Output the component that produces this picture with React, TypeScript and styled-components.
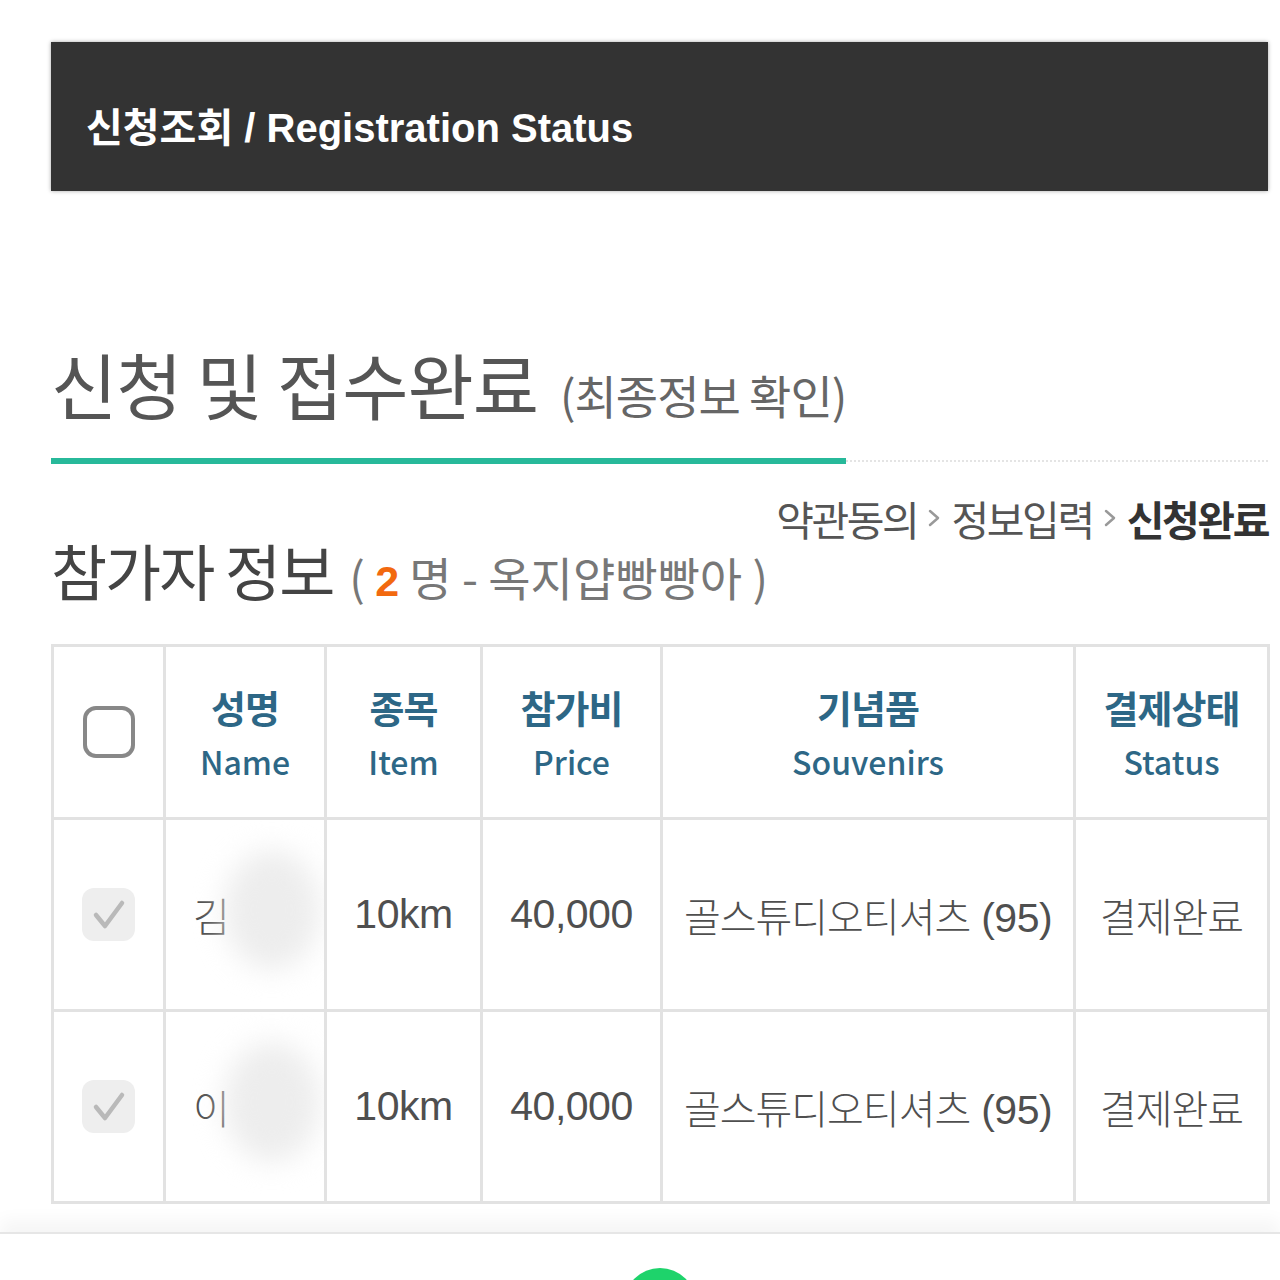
import styled, { createGlobalStyle } from 'styled-components';

const GlobalStyle = createGlobalStyle`
  html, body {
    margin: 0;
    padding: 0;
    background: #fff;
  }
  body {
    width: 1280px;
    height: 1280px;
    overflow: hidden;
    font-family: 'Liberation Sans', 'Noto Sans CJK KR', sans-serif;
  }
`;

const KR = `'Noto Sans CJK KR', 'Liberation Sans', sans-serif`;
const BODY = `'Liberation Sans', 'Noto Sans CJK KR', sans-serif`;

const Page = styled.div`
  width: 1280px;
  height: 1280px;
  overflow: hidden;
  display: flex;
  flex-direction: column;
`;

const Content = styled.div`
  padding: 42px 12px 0 51px;
  display: flex;
  flex-direction: column;
`;

// 상단 어두운 타이틀 바
const TopBar = styled.div`
  height: 149px;
  background: #333;
  box-shadow: 0 0 4px rgba(0, 0, 0, 0.35);
  display: flex;
  align-items: center;
  padding: 16px 0 0 35px;
  box-sizing: border-box;
`;

const TopTitle = styled.h1`
  margin: 0;
  font-family: ${BODY};
  font-size: 40px;
  font-weight: 700;
  color: #fff;
  letter-spacing: 0;
`;

const Heading = styled.h2`
  margin: 150px 0 0 0;
  font-family: ${KR};
  font-size: 72px;
  line-height: 84px;
  font-weight: 400;
  color: #555;
  letter-spacing: -1px;
  white-space: nowrap;
`;

const HeadingSub = styled.span`
  font-size: 46px;
  line-height: 1;
  letter-spacing: -1px;
  color: #666;
  margin-left: 22px;
`;

const Divider = styled.div`
  margin-top: 33px;
  display: flex;
  align-items: center;
`;

const DividerAccent = styled.div`
  width: 795px;
  height: 6px;
  background: #27b99a;
`;

const DividerRest = styled.div`
  flex: 1;
  border-top: 2px dotted #e4e4e4;
`;

const Steps = styled.div`
  margin-top: 29px;
  display: flex;
  justify-content: flex-end;
  align-items: center;
  gap: 6px;
  font-family: ${KR};
  font-size: 41px;
  line-height: 50px;
  letter-spacing: -2.4px;
  color: #555;
`;

const Step = styled.span<{ $active?: boolean }>`
  font-weight: ${(p) => (p.$active ? 700 : 400)};
  color: ${(p) => (p.$active ? '#333' : '#555')};
`;

const StepArrow = () => (
  <svg width="22" height="30" viewBox="0 0 22 30" fill="none">
    <polyline points="7,8 15,15 7,22" stroke="#999" strokeWidth="2.5" strokeLinecap="round" strokeLinejoin="round" />
  </svg>
);

const SectionTitle = styled.h3`
  margin: -10px 0 0 0;
  font-family: ${KR};
  font-size: 61px;
  line-height: 74px;
  font-weight: 400;
  color: #444;
  letter-spacing: -2px;
  white-space: nowrap;
`;

const SectionSub = styled.span`
  font-size: 46px;
  line-height: 1;
  color: #777;
  letter-spacing: 0;
  margin-left: 16px;
`;

const Count = styled.b`
  font-family: ${BODY};
  font-size: 43px;
  font-weight: 700;
  color: #f2690f;
`;

const Table = styled.table`
  margin-top: 37px;
  width: 1217px;
  border-collapse: collapse;
  table-layout: fixed;
  border: 3px solid #e2e2e2;
`;

const HeadCell = styled.th`
  height: 170px;
  border: 3px solid #e2e2e2;
  text-align: center;
  vertical-align: middle;
  padding: 0;
  font-family: ${KR};
  color: #2d6786;
`;

const HeadKo = styled.div`
  font-size: 38px;
  font-weight: 700;
  line-height: 46px;
  letter-spacing: -1px;
`;

const HeadEn = styled.div`
  margin-top: 12px;
  font-size: 32px;
  font-weight: 500;
  line-height: 38px;
`;

const Cell = styled.td<{ $align?: 'left' | 'center' }>`
  height: 189px;
  border: 3px solid #e2e2e2;
  padding: 0 0 0 ${(p) => (p.$align === 'left' ? '27px' : '0')};
  text-align: ${(p) => p.$align ?? 'center'};
  vertical-align: middle;
  font-family: ${BODY};
  font-size: 41px;
  color: #4f4f4f;
  letter-spacing: -0.5px;
  position: relative;
  overflow: hidden;
`;

const KoText = styled.span`
  font-family: ${KR};
  font-size: 40px;
  font-weight: 300;
  letter-spacing: -1px;
`;

// 이름 가림 처리 (블러)
const Smudge = styled.div`
  position: absolute;
  left: 58px;
  top: 30px;
  width: 96px;
  height: 120px;
  border-radius: 50%;
  background: #ededed;
  filter: blur(14px);
`;

const BoxEmpty = styled.div`
  width: 52px;
  height: 52px;
  margin: 0 auto;
  box-sizing: border-box;
  border: 4px solid #888;
  border-radius: 13px;
  background: #fff;
`;

const BoxChecked = styled.div`
  width: 53px;
  height: 53px;
  margin: 0 auto;
  border-radius: 12px;
  background: #eeeeee;
  display: flex;
  align-items: center;
  justify-content: center;
`;

const CheckMark = () => (
  <svg width="40" height="40" viewBox="0 0 40 40" fill="none">
    <polyline points="7,20 16,31 33,8" stroke="#b9b9b9" strokeWidth="4.5" strokeLinecap="round" strokeLinejoin="round" />
  </svg>
);

const Footer = styled.div`
  margin-top: 28px;
  flex: 1;
  border-top: 2px solid #e6e6e6;
  box-shadow: 0 -12px 16px rgba(0, 0, 0, 0.04);
  display: flex;
  justify-content: center;
  padding: 34px 0 0 40px;
`;

const FloatButton = styled.div`
  width: 72px;
  height: 72px;
  border-radius: 50%;
  background: #1ed36b;
  flex: none;
`;

const columns = [
  { ko: '성명', en: 'Name', width: 161 },
  { ko: '종목', en: 'Item', width: 156 },
  { ko: '참가비', en: 'Price', width: 180 },
  { ko: '기념품', en: 'Souvenirs', width: 413 },
  { ko: '결제상태', en: 'Status', width: 194 },
];

const participants = [
  { name: '김', item: '10km', price: '40,000', souvenir: '골스튜디오티셔츠', size: '(95)', status: '결제완료' },
  { name: '이', item: '10km', price: '40,000', souvenir: '골스튜디오티셔츠', size: '(95)', status: '결제완료' },
];

const App = () => {
  return (
    <Page>
      <GlobalStyle />
      <Content>
        <TopBar>
          <TopTitle>신청조회 / Registration Status</TopTitle>
        </TopBar>

        <Heading>
          신청 및 접수완료
          <HeadingSub>(최종정보 확인)</HeadingSub>
        </Heading>
        <Divider>
          <DividerAccent />
          <DividerRest />
        </Divider>

        <Steps>
          <Step>약관동의</Step>
          <StepArrow />
          <Step>정보입력</Step>
          <StepArrow />
          <Step $active>신청완료</Step>
        </Steps>

        <SectionTitle>
          참가자 정보
          <SectionSub>
            ( <Count>2</Count> 명 - 옥지얍빵빵아 )
          </SectionSub>
        </SectionTitle>

        <Table>
          <colgroup>
            <col style={{ width: 112 }} />
            {columns.map((c) => (
              <col key={c.en} style={{ width: c.width }} />
            ))}
          </colgroup>
          <thead>
            <tr>
              <HeadCell>
                <BoxEmpty />
              </HeadCell>
              {columns.map((c) => (
                <HeadCell key={c.en}>
                  <HeadKo>{c.ko}</HeadKo>
                  <HeadEn>{c.en}</HeadEn>
                </HeadCell>
              ))}
            </tr>
          </thead>
          <tbody>
            {participants.map((p, i) => (
              <tr key={i}>
                <Cell>
                  <BoxChecked>
                    <CheckMark />
                  </BoxChecked>
                </Cell>
                <Cell $align="left">
                  <KoText>{p.name}</KoText>
                  <Smudge />
                </Cell>
                <Cell>{p.item}</Cell>
                <Cell>{p.price}</Cell>
                <Cell>
                  <KoText>{p.souvenir}</KoText> {p.size}
                </Cell>
                <Cell>
                  <KoText>{p.status}</KoText>
                </Cell>
              </tr>
            ))}
          </tbody>
        </Table>
      </Content>
      <Footer>
        <FloatButton />
      </Footer>
    </Page>
  );
};

export default App;
